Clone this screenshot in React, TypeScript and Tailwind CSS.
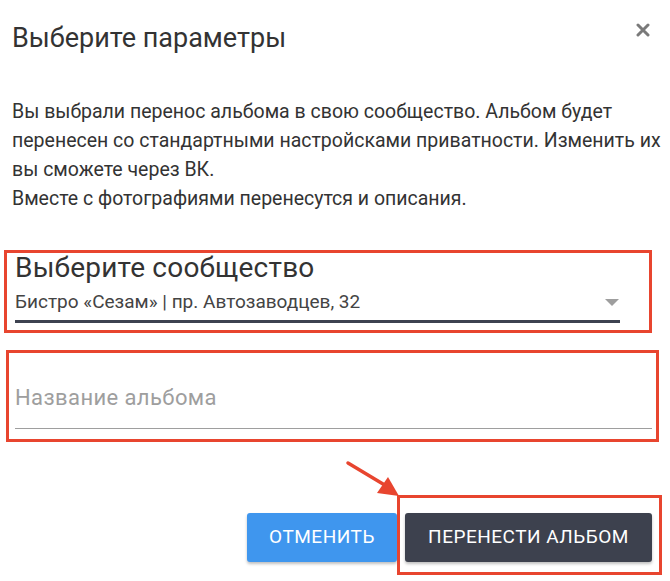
import React from "react";

export default function App() {
  return (
    <div className="relative w-[670px] h-[581px] bg-white font-['Roboto',sans-serif] text-[#333]">
      {/* Header */}
      <div className="flex items-start justify-between pl-[12px] pr-[20px] pt-[22px]">
        <h1 className="text-[27px] leading-[32px] text-[#333]">Выберите параметры</h1>
        <button className="mt-[1px] p-0">
          <svg width="14" height="14" viewBox="0 0 14 14">
            <path d="M2 2 L12 12 M12 2 L2 12" stroke="#7a7a7a" strokeWidth="3" strokeLinecap="round" />
          </svg>
        </button>
      </div>

      {/* Text */}
      <div className="whitespace-nowrap pl-[12px] pr-[2px] pt-[43px] text-[19.5px] leading-[29px] text-[#333]">
        <p>
          Вы выбрали перенос альбома в свою сообщество. Альбом будет
          <br />
          перенесен со стандартными настройсками приватности. Изменить их
          <br />
          вы сможете через ВК.
        </p>
        <p>Вместе с фотографиями перенесутся и описания.</p>
      </div>

      {/* Community select */}
      <div className="ml-[4px] mr-[18px] mt-[37px] h-[83px] border-[3px] border-[#e8452f] pl-[8px] pr-[29px]">
        <div className="text-[28px] leading-[30px] text-[#333] tracking-[0.2px]">Выберите сообщество</div>
        <div className="mt-[7px] flex items-center justify-between border-b-[3px] border-[#3d4250] pb-[6px]">
          <span className="text-[19px] leading-[24px] text-[#444]">Бистро «Сезам» | пр. Автозаводцев, 32</span>
          <span className="mr-[1px] h-0 w-0 border-x-[7px] border-t-[7px] border-x-transparent border-t-[#9e9e9e]" />
        </div>
      </div>

      {/* Album name */}
      <div className="ml-[6px] mr-[11px] mt-[17px] h-[92px] border-[3px] border-[#e8452f] pl-[6px] pr-[4px] pt-[32px]">
        <div className="border-b border-[#9e9e9e] pb-[17px] text-[22px] leading-[26px] text-[#9e9e9e] tracking-[0.4px]">
          Название альбома
        </div>
      </div>

      {/* Buttons */}
      <div className="mt-[53px] flex items-start justify-end pr-[8px]">
        <button className="mt-[18px] h-[49px] w-[150px] rounded-[3px] bg-[#3f96ee] text-[19px] tracking-[0.5px] text-white shadow-[0_2px_3px_rgba(0,0,0,0.25)]">
          ОТМЕНИТЬ
        </button>
        <div className="flex h-[80px] w-[265px] items-start border-[3px] border-[#e8452f] pl-[5px] pt-[15px]">
          <button className="h-[49px] w-[247px] rounded-[3px] bg-[#3d414e] text-[19px] tracking-[0.5px] text-white shadow-[0_2px_3px_rgba(0,0,0,0.25)]">
            ПЕРЕНЕСТИ АЛЬБОМ
          </button>
        </div>
      </div>

      {/* Annotation arrow */}
      <svg className="absolute left-[340px] top-[455px]" width="70" height="50" viewBox="0 0 70 50">
        <line x1="8" y1="8" x2="48" y2="32" stroke="#e8452f" strokeWidth="3.5" strokeLinecap="round" />
        <polygon points="59,41 37,38 48,22" fill="#e8452f" />
      </svg>
    </div>
  );
}
